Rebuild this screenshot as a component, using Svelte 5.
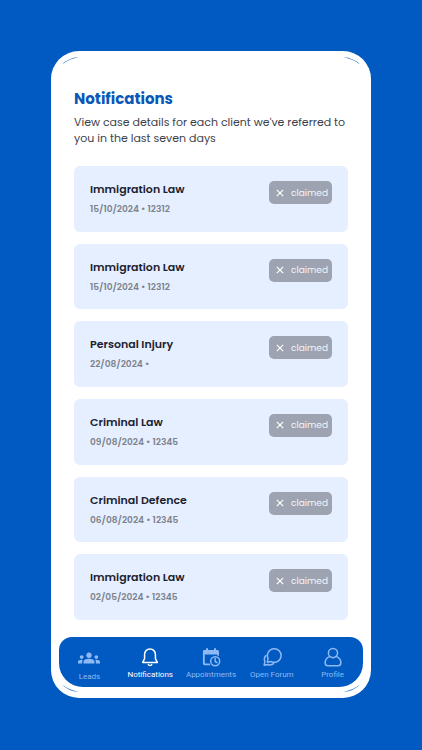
<script>
  const cases = [
    { title: 'Immigration Law', detail: '15/10/2024 • 12312' },
    { title: 'Immigration Law', detail: '15/10/2024 • 12312' },
    { title: 'Personal Injury', detail: '22/08/2024 •' },
    { title: 'Criminal Law', detail: '09/08/2024 • 12345' },
    { title: 'Criminal Defence', detail: '06/08/2024 • 12345' },
    { title: 'Immigration Law', detail: '02/05/2024 • 12345' }
  ];
  const tabs = ['Leads', 'Notifications', 'Appointments', 'Open Forum', 'Profile'];
  const corners = ['tl', 'tr', 'bl', 'br'];
</script>

<div class="page">
  <div class="phone">
    {#each corners as corner}
      <svg class="corner {corner}" viewBox="0 0 32 20" aria-hidden="true">
        <path d="M11 13.500Q17 7 28 6Q18 7.800 11 13.500Z" />
      </svg>
    {/each}

    <main>
      <h1>Notifications</h1>
      <p class="intro">View case details for each client we've referred to you in the last seven days</p>
      <ul>
        {#each cases as item}
          <li>
            <div>
              <h2>{item.title}</h2>
              <p class="detail">{item.detail}</p>
            </div>
            <button type="button">
              <svg viewBox="0 0 8 8" aria-hidden="true"><path d="M.8.8l6.400 6.400M7.200.8L.8 7.200" /></svg>
              claimed
            </button>
          </li>
        {/each}
      </ul>
    </main>

    <nav aria-label="Main">
      {#each tabs as tab}
        <a href="#{tab.toLowerCase().replace(' ', '-')}" class:active={tab === 'Notifications'} aria-current={tab === 'Notifications' ? 'page' : undefined}>
          <svg class:wide={tab === 'Leads'} viewBox="0 0 24 24" aria-hidden="true">
            {#if tab === 'Leads'}
              <g class="solid">
                <path d="M12 12.750c1.630 0 3.070.39 4.240.9 1.080.48 1.760 1.560 1.760 2.730V18H6v-1.610c0-1.180.68-2.260 1.760-2.730 1.170-.52 2.610-.91 4.240-.91zM4 13c1.100 0 2-.9 2-2s-.9-2-2-2-2 .9-2 2 .9 2 2 2zm1.130 1.100C4.760 14.040 4.390 14 4 14c-.99 0-1.930.21-2.780.58C.48 14.900 0 15.620 0 16.430V18h4.500v-1.610c0-.83.23-1.610.63-2.290zM20 13c1.100 0 2-.9 2-2s-.9-2-2-2-2 .9-2 2 .9 2 2 2zm4 3.430c0-.81-.48-1.530-1.220-1.850A6.950 6.950 0 0 0 20 14c-.39 0-.76.04-1.130.1.400.68.63 1.460.63 2.290V18H24v-1.570zM12 6c1.660 0 3 1.340 3 3s-1.340 3-3 3-3-1.340-3-3 1.340-3 3-3z" />
              </g>
            {:else if tab === 'Notifications'}
              <path d="M12 2.500C8.100 2.500 5.500 5.300 5.500 9V14L3.200 18.500H20.800L18.500 14V9C18.500 5.300 15.900 2.500 12 2.500Z" />
              <path d="M10 21.200Q12 23.200 14 21.200" />
            {:else if tab === 'Appointments'}
              <g class="solid">
                <path d="M4 3.500h2V1.500h2.400v2h7.200v-2H18v2h1.500c1 0 2 .9 2 2v5.700a7 7 0 0 0-2-1V8.500H4.500v11.300h5.600c.3.700.8 1.400 1.300 2H4.300c-1.100 0-2-.9-2-2V5.500c0-1.100.7-2 1.700-2z" />
                <path d="M3 4h18v5H3z" />
              </g>
              <circle cx="17" cy="17" r="5.400" />
              <path d="M17 13.800V17.400L19.300 18.700" />
            {:else if tab === 'Open Forum'}
              <path d="M6.600 16.600L7.300 13.700A8.200 8.200 0 1 1 11 17.500L6.600 18.200Z" />
              <path d="M4.700 10.200A7 7 0 0 0 3.400 17.500L2.600 21.800L7 21A7 7 0 0 0 14 20" />
            {:else}
              <circle cx="12" cy="7.300" r="5.500" />
              <path d="M8.200 11.300C4.500 12.700 2.600 15.600 2.600 19.200Q2.600 22.600 6 22.600H18Q21.400 22.600 21.400 19.200C21.400 15.600 19.500 12.700 15.800 11.300" />
            {/if}
          </svg>
          <span>{tab}</span>
        </a>
      {/each}
    </nav>
  </div>
</div>

<style>
  :global(body) {
    margin: 0;
    background: #015ac2;
  }
  .page {
    box-sizing: border-box;
    min-height: 100vh;
    padding: 51px 51px 52px;
    display: flex;
    background: #015ac2;
    font-family: Poppins, Inter, "Open Sans", sans-serif;
  }
  .phone {
    position: relative;
    box-sizing: border-box;
    flex: 1;
    min-width: 0;
    padding: 36px 8px 11px;
    display: flex;
    flex-direction: column;
    gap: 17px;
    border-radius: 28px;
    background: #fff;
  }
  .corner {
    position: absolute;
    width: 32px;
    height: 20px;
    fill: #015ac2;
  }
  .tl { top: 0; left: 0; }
  .tr { top: 0; right: 0; transform: scaleX(-1); }
  .bl { bottom: 0; left: 0; transform: scaleY(-1); }
  .br { bottom: 0; right: 0; transform: scale(-1); }
  main {
    flex: 1;
    display: flex;
    flex-direction: column;
    padding: 0 15px;
  }
  h1, h2, p, ul {
    margin: 0;
    padding: 0;
  }
  h1 {
    font-size: 15px;
    line-height: 24px;
    font-weight: 700;
    color: #0a58b8;
  }
  .intro {
    margin: 3px 0 20px;
    font-size: 11px;
    line-height: 16px;
    color: #3c424c;
  }
  ul {
    flex: 1;
    display: grid;
    grid-auto-rows: 1fr;
    gap: 12px;
    list-style: none;
  }
  li {
    display: flex;
    justify-content: space-between;
    align-items: flex-start;
    padding: 15px 16px 14px;
    border-radius: 6px;
    background: #e5efff;
  }
  h2 {
    font-size: 11px;
    line-height: 16px;
    font-weight: 600;
    color: #1c2230;
  }
  .detail {
    margin-top: 4px;
    font-size: 9px;
    line-height: 16px;
    font-weight: 600;
    color: #7d828c;
  }
  button {
    width: 63px;
    height: 23px;
    padding: 0 4px 0 7px;
    display: flex;
    align-items: center;
    justify-content: space-between;
    border: 0;
    border-radius: 5px;
    background: #9da3b0;
    color: #f4f6fa;
    font: 400 9px/16px Poppins, Inter, "Open Sans", sans-serif;
  }
  button svg {
    width: 8px;
    height: 8px;
    stroke: #fff;
    stroke-width: 1.200;
  }
  nav {
    display: grid;
    grid-template-columns: repeat(5, 1fr);
    height: 50px;
    border-radius: 13px 13px 24px 24px;
    background: #015ac2;
  }
  a {
    display: flex;
    flex-direction: column;
    align-items: center;
    gap: 2px;
    padding-top: 10px;
    color: #8fb9f4;
    text-decoration: none;
    font: 400 8px/12px Roboto, sans-serif;
    white-space: nowrap;
  }
  a.active {
    color: #fff;
  }
  a svg {
    width: 20px;
    height: 20px;
    fill: none;
    stroke: currentColor;
    stroke-width: 1.800;
    stroke-linejoin: round;
    stroke-linecap: round;
  }
  a svg.wide {
    width: 22px;
    height: 22px;
  }
  .solid {
    fill: currentColor;
    stroke: none;
  }
</style>
